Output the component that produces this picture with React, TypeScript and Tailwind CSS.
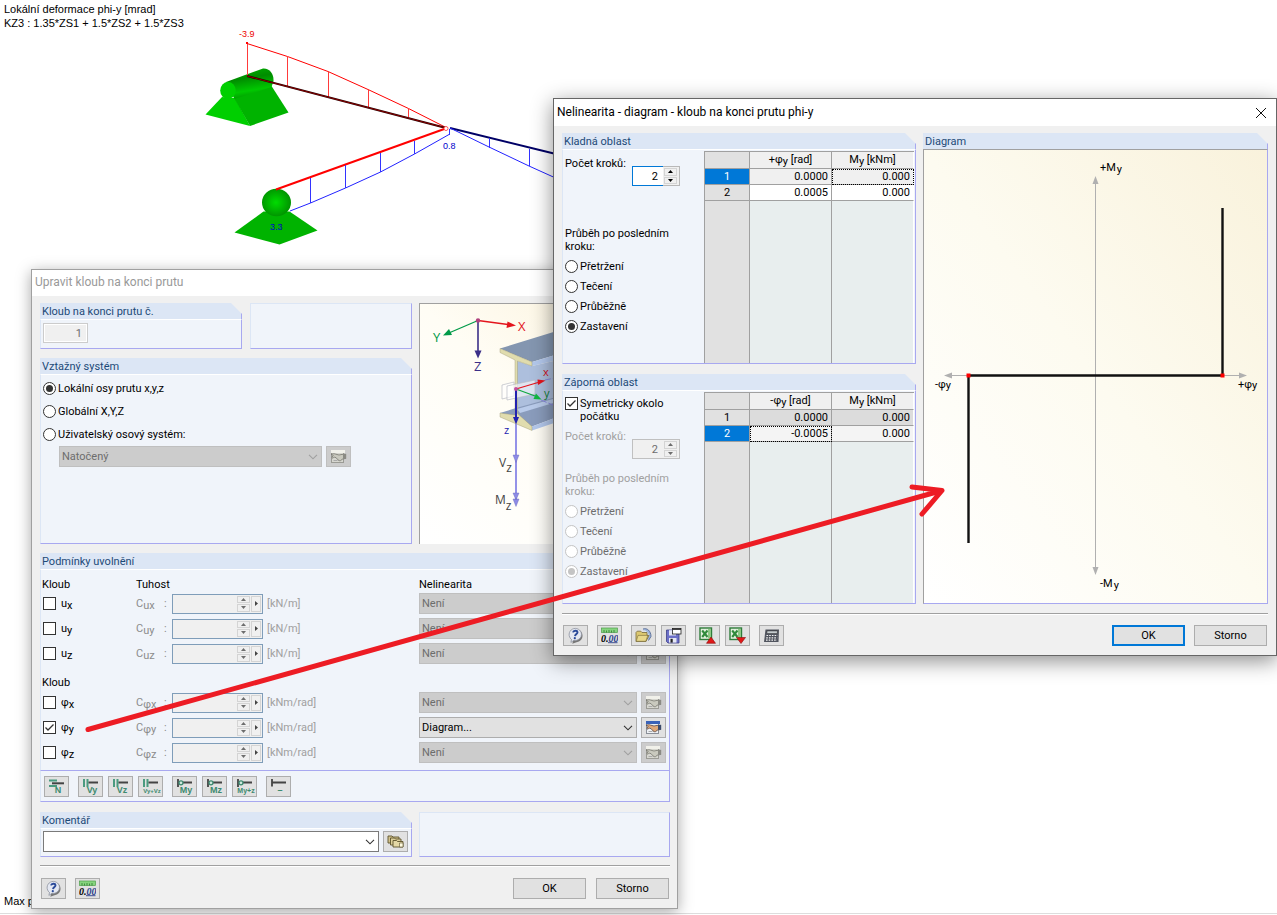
import { useState, type ReactNode } from 'react';
import clsx from 'clsx';

const stopModes = ['Přetržení', 'Tečení', 'Průběžně', 'Zastavení'];

const translations = [
  { base: 'u', axis: 'x' },
  { base: 'u', axis: 'y' },
  { base: 'u', axis: 'z' },
];

const rotations = [
  { base: 'φ', axis: 'x' },
  { base: 'φ', axis: 'y', active: true },
  { base: 'φ', axis: 'z' },
];

function Sub({ children }: { children: ReactNode }) {
  return <span className="align-[-2px] leading-none">{children}</span>;
}

function Group({ title, className, sunken, children }: { title: string; className?: string; sunken?: boolean; children?: ReactNode }) {
  return (
    <section className={clsx('flex flex-col', className)}>
      <h2 className="h-4 border-r border-[#a8a8f0] bg-[#dce6f5] pl-[2px] leading-[17px] text-[#1c4a78] [clip-path:polygon(0_0,calc(100%-11px)_0,100%_11px,100%_100%,0_100%)]">
        {title}
      </h2>
      <div
        className={clsx(
          'flex-1 border border-r-[#a8a8f0] border-b-[#a8a8f0]',
          sunken
            ? 'border-t-[#a0a0a0] border-l-[#a0a0a0] bg-linear-to-tr from-white via-[#fdfbf0] to-[#f9f2dc]'
            : 'border-t-white border-l-[#dce6f5] bg-[#f0f4fa]'
        )}
      >
        {children}
      </div>
    </section>
  );
}

function EmptyPanel({ className }: { className?: string }) {
  return (
    <div className={clsx('border border-t-[#dce6f5] border-r-[#a8a8f0] border-b-[#a8a8f0] border-l-[#dce6f5] bg-[#f0f4fa]', className)} />
  );
}

function Radio({ name, label, checked, disabled }: { name: string; label: string; checked?: boolean; disabled?: boolean }) {
  return (
    <label className={clsx('flex items-center gap-[2px]', disabled && 'text-[#6d6d6d]')}>
      <input
        type="radio"
        name={name}
        defaultChecked={checked}
        disabled={disabled}
        className="grid size-[13px] shrink-0 appearance-none place-content-center rounded-full border border-[#333] bg-white before:size-[7px] before:rounded-full before:content-[''] checked:before:bg-[#333] disabled:border-[#c4c4c4] disabled:checked:before:bg-[#c4c4c4]"
      />
      {label}
    </label>
  );
}

function Check({ id, checked }: { id: string; checked?: boolean }) {
  return (
    <span className="relative flex size-[13px] shrink-0">
      <input type="checkbox" id={id} defaultChecked={checked} className="peer size-[13px] appearance-none border border-[#333] bg-white" />
      <svg viewBox="0 0 13 13" className="pointer-events-none absolute inset-0 hidden peer-checked:block" fill="none" stroke="#333" strokeWidth="1.3">
        <path d="M2.5 6.5 5 9l5.5-5.5" />
      </svg>
    </span>
  );
}

function Select({ label, value, disabled, className }: { label: string; value: string; disabled?: boolean; className?: string }) {
  return (
    <div className={clsx('relative', className)}>
      <select
        aria-label={label}
        disabled={disabled}
        defaultValue={value}
        className={clsx(
          'block h-[21px] w-full appearance-none border pl-[2px] opacity-100',
          disabled
            ? 'border-[#bfbfbf] bg-[#ccc] text-[#6d6d6d]'
            : value
              ? 'border-[#adadad] bg-[#e1e1e1]'
              : 'border-[#7a7a7a] bg-white'
        )}
      >
        <option>{value}</option>
      </select>
      <svg viewBox="0 0 10 6" className="pointer-events-none absolute top-[8px] right-[4px] h-[6px] w-[10px]" fill="none" stroke={disabled ? '#a0a0a0' : '#333'} strokeWidth="1.1">
        <path d="M1 .8 5 4.8 9 .8" />
      </svg>
    </div>
  );
}

function Stepper() {
  return (
    <span className="flex w-[13px] flex-col gap-px">
      <button aria-label="Více" className="grid flex-1 place-content-center border border-[#d4d4d4] bg-[#f0f0f0]">
        <svg viewBox="0 0 5 3" className="h-[3px] w-[5px]"><path d="M0 3h5L2.500 0z" fill="currentColor" /></svg>
      </button>
      <button aria-label="Méně" className="grid flex-1 place-content-center border border-[#d4d4d4] bg-[#f0f0f0]">
        <svg viewBox="0 0 5 3" className="h-[3px] w-[5px]"><path d="M0 0h5L2.500 3z" fill="currentColor" /></svg>
      </button>
    </span>
  );
}

function StepCount({ id, disabled }: { id: string; disabled?: boolean }) {
  const [steps, setSteps] = useState('2');
  return (
    <div className={clsx('flex h-5 w-12 border bg-[#f0f0f0]', disabled ? 'border-[#c0c0c0] text-[#6d6d6d]' : 'border-[#b8b8b8]')}>
      <input
        id={id}
        value={steps}
        disabled={disabled}
        onChange={(e) => setSteps(e.target.value)}
        className={clsx('-my-px -ml-px w-[31px] pr-[5px] text-right outline-none', !disabled && 'border border-r-0 border-[#0078d7] bg-white')}
      />
      <span className="flex py-px pl-px">
        <Stepper />
      </span>
    </div>
  );
}

function IconButton({ label, disabled, children }: { label: string; disabled?: boolean; children: ReactNode }) {
  return (
    <button
      aria-label={label}
      disabled={disabled}
      className={clsx('grid h-[21px] w-[25px] shrink-0 place-content-center border', disabled ? 'border-[#bfbfbf] bg-[#ccc]' : 'border-[#adadad] bg-[#e1e1e1]')}
    >
      {children}
    </button>
  );
}

function PushButton({ primary, children }: { primary?: boolean; children: ReactNode }) {
  return (
    <button className={clsx('h-[21px] w-[73px] bg-[#e1e1e1]', primary ? 'border-2 border-[#0078d7]' : 'border border-[#adadad]')}>
      {children}
    </button>
  );
}

function HelpIcon() {
  return (
    <svg width="17" height="17" viewBox="0 0 17 17">
      <path d="M14.500 8a6.200 6.200 0 0 1-6 6.800L4.300 16.300l.8-2.600A6.300 6.300 0 1 1 14.500 8z" fill="#777" transform="translate(1 .4)" />
      <path d="M14.500 7.200A6.200 6 0 0 1 7 13.300L3.900 15.400l.6-2.900A6.200 6.200 0 1 1 14.500 7.200z" fill="#e4e8f2" stroke="#8e93a0" strokeWidth=".8" />
      <path d="M6 5.400C6.500 3.300 10.300 3 10.500 5.200c.1 1.700-2.200 1.900-2.500 4" fill="none" stroke="#2a4a9a" strokeWidth="1.900" />
      <circle cx="7.800" cy="11.200" r="1.100" fill="#2a4a9a" />
    </svg>
  );
}

function UnitsIcon() {
  return (
    <svg width="17" height="17" viewBox="0 0 17 17">
      <rect x=".5" y="1" width="16" height="4.500" fill="#86d47e" stroke="#4f9d4c" strokeWidth=".7" />
      <path d="M3 3v2.500M5.500 3.500v2M8 3v2.500M10.500 3.500v2M13 3v2.500" stroke="#2f7a2f" strokeWidth=".8" />
      <text x="0" y="14.500" fontFamily="Liberation Serif, serif" fontStyle="italic" fontWeight="700" fontSize="10">
        0.<tspan fill="#2b3f8c">00</tspan>
      </text>
      <path d="M7 15.700h9.500" stroke="#2b3f8c" strokeWidth=".9" />
    </svg>
  );
}

function EditIcon({ active }: { active?: boolean }) {
  return (
    <svg width="17" height="15" viewBox="0 0 17 15">
      <rect x="1.500" y="1.500" width="12" height="12" fill={active ? '#eef1f5' : '#d7d7d0'} stroke={active ? '#8a8f98' : '#9b9b95'} />
      <rect x="1" y="1" width="14" height="3" fill={active ? '#3a62b8' : '#f1f1ea'} />
      <path
        d="M1 5.300c1.500-.6 3.200-.8 4.500-.2L9 6l3-.6 3.500.2V9.500l-3 .4c-1 1.800-3 2.600-4.500 1L6.200 8.800 4.300 8 3 9.300 1.800 8.300 3.300 6.500z"
        fill={active ? '#e0a878' : '#c9c9be'}
        stroke={active ? '#5b4a48' : '#77776f'}
        strokeWidth=".8"
      />
      <rect x="13" y="4.800" width="3.200" height="5" fill={active ? '#3b4a6b' : '#8b8b84'} />
      <path d="M3.500 11.500h4" stroke="#aaa" />
    </svg>
  );
}

function OpenIcon() {
  return (
    <svg width="17" height="17" viewBox="0 0 17 17">
      <path d="M8 2c4-1.500 8 2 8 7.500l-2.500 4" fill="#9fb6dc" stroke="#4a5f8c" strokeWidth=".8" />
      <path d="M9 4c2.500 0 4.500 2.500 4.500 6" fill="none" stroke="#fff" strokeWidth="1" />
      <path d="M1 14.500V5.500l1.200-1.300h3.600L7 5.500h5v3L14 8.400l-3 6.100z" fill="#dcc870" stroke="#77693a" strokeWidth=".8" />
      <path d="M1.200 14.300 3 8.400h9.800l-2 5.900z" fill="#e8d88a" stroke="#77693a" strokeWidth=".6" />
    </svg>
  );
}

function SaveIcon() {
  return (
    <svg width="17" height="17" viewBox="0 0 17 17">
      <path d="M1.500 3h12.500v13H3L1.500 14.500z" fill="#6c70c8" stroke="#3c3f86" strokeWidth=".8" />
      <rect x="4" y="3.200" width="7" height="5.300" fill="#e6e8f4" />
      <rect x="4" y="11" width="7.500" height="4.600" fill="#e6e8f4" />
      <rect x="5.500" y="11.800" width="2.200" height="3.800" fill="#222" />
      <rect x="7.500" y="1.500" width="8.500" height="5.500" fill="#fff" stroke="#222" strokeWidth=".8" />
      <path d="M7.500 2.200H16" stroke="#222" strokeWidth="1.300" />
    </svg>
  );
}

function ExcelIcon({ down }: { down?: boolean }) {
  return (
    <svg width="17" height="17" viewBox="0 0 17 17">
      <rect x="1" y="1" width="11.500" height="11.500" fill="#e2f0de" stroke="#2f7d3b" strokeWidth="1.400" />
      <path d="M9 2h3v9.500H9z" fill="#8cc884" />
      <path d="M3.200 3.500 8.500 10M8.500 3.500 3.200 10" stroke="#2f8a3b" strokeWidth="2.100" />
      <path d={down ? 'M7.500 10.500h9L12 16.500z' : 'M7.500 16.300h9L12 10z'} fill="#e01818" stroke="#8c0c0c" strokeWidth=".6" />
    </svg>
  );
}

function CalculatorIcon() {
  return (
    <svg width="17" height="15" viewBox="0 0 17 15">
      <path d="M2.500 1.500H16L15.500 14H1z" fill="#50545e" />
      <path d="M4 3h10.500l-.2 2.400H3.800z" fill="#cfd6da" stroke="#222" strokeWidth=".5" />
      <path d="M3.500 7.500h11M3.200 9.800h11M3 12.100h11" stroke="#f2f2f2" strokeWidth="1.200" strokeDasharray="1.600 1.100" />
    </svg>
  );
}

function CommentIcon() {
  return (
    <svg width="17" height="15" viewBox="0 0 17 15" stroke="#5c522c" strokeWidth=".9">
      <path d="M1 2h4l1 1h6v6H1z" fill="#d2c28a" />
      <path d="M3.500 4h4l1 1H14v6H3.500z" fill="#dccf9a" />
      <path d="M6 6.500h3.500l1 1H16v5.500H6z" fill="#e4d8a6" />
      <path d="M12.500 9h3.500v4h-3.500z" fill="#fffbe0" strokeWidth=".6" />
    </svg>
  );
}

function PresetIcon({ kind, label }: { kind: 'n' | 'v' | 'm' | 'none'; label: string }) {
  return (
    <svg width="21" height="17" viewBox="0 0 21 17">
      {kind === 'n' && (
        <>
          <path d="M3 2.500h8M3 8h8" stroke="#4b9b80" strokeWidth="2" />
          <path d="M6 5.300h12" stroke="#444" strokeWidth="2" />
        </>
      )}
      {kind === 'v' && (
        <>
          <path d="M4 1v8M7.500 1v8" stroke="#4b9b80" strokeWidth="2" />
          <path d="M8.500 4.500H18" stroke="#444" strokeWidth="2" />
        </>
      )}
      {kind === 'm' && (
        <>
          <path d="M4 1v8M8 4.500h10" stroke="#444" strokeWidth="1.800" />
          <circle cx="7" cy="4.800" r="2" fill="#cfe8dd" stroke="#3d8a70" strokeWidth="1.300" />
        </>
      )}
      {kind === 'none' && <path d="M4 1v7.500M4.500 4.500H18" stroke="#444" strokeWidth="1.800" />}
      <text
        x="12"
        y="15"
        textAnchor="middle"
        fontFamily="Liberation Sans, sans-serif"
        fontWeight="700"
        fontSize={label.length > 4 ? 6 : label.length > 3 ? 7 : 9}
        fill="#3d8a70"
      >
        {label}
      </text>
    </svg>
  );
}

function Separator({ className }: { className?: string }) {
  return <div className={clsx('h-[2px] border-t border-b border-t-[#a0a0a0] border-b-white', className)} />;
}

function ReleaseRow({ base, axis, unit, active }: { base: string; axis: string; unit: string; active?: boolean }) {
  const id = `release-${base}-${axis}`;
  return (
    <div className="grid h-[25px] grid-cols-[93px_28px_8px_95px_152px_1fr_25px] items-center pl-[2px] pr-[3px]">
      <span className="flex items-center gap-[5px]">
        <Check id={id} checked={active} />
        <label htmlFor={id}>
          {base}
          <Sub>{axis}</Sub>
        </label>
      </span>
      <label htmlFor={`${id}-stiffness`} className="text-[#8c8c8c]">
        C
        <Sub>
          {base}
          {axis}
        </Sub>
      </label>
      <span className="text-[#8c8c8c]">:</span>
      <span className="flex h-5 w-[91px] border border-[#7f9db9] bg-[#f0f0f0] p-px text-[#6d6d6d]">
        <input id={`${id}-stiffness`} disabled className="w-0 flex-1" />
        <Stepper />
        <button aria-label="Další" className="ml-px grid w-[10px] place-content-center border border-[#d4d4d4]">
          <svg viewBox="0 0 3 5" className="h-[5px] w-[3px]"><path d="M0 0v5l3-2.500z" fill="#444" /></svg>
        </button>
      </span>
      <span className="text-[#a0a0a0]">{unit}</span>
      <Select label={`Nelinearita ${base}${axis}`} value={active ? 'Diagram...' : 'Není'} disabled={!active} className="pr-1 [&>svg]:mr-1" />
      <IconButton label="Upravit nelinearitu" disabled={!active}>
        <EditIcon active={active} />
      </IconButton>
    </div>
  );
}

function Scene() {
  return (
    <svg className="absolute top-0 left-0" width="600" height="270" viewBox="0 0 600 270" fontFamily="Liberation Sans, sans-serif" fontSize="9">
      <defs>
        <linearGradient id="roller" x1=".2" y1="0" x2=".45" y2="1">
          <stop offset="0" stopColor="#00b000" />
          <stop offset=".35" stopColor="#008c00" />
          <stop offset=".75" stopColor="#00c800" />
          <stop offset="1" stopColor="#009400" />
        </linearGradient>
        <radialGradient id="ball" cx=".48" cy=".5" r=".55">
          <stop offset="0" stopColor="#00dc00" />
          <stop offset="1" stopColor="#008f00" />
        </radialGradient>
      </defs>
      <path d="M222 97 205.500 114.500 250 126 235 98z" fill="#00cf00" />
      <path d="M234 98 250 126 288.500 112.500 271.500 86z" fill="#00b300" />
      <path d="M226 82 263 68.500c7-.5 11 6 10.500 12.500L271.500 87 234.500 99z" fill="url(#roller)" />
      <ellipse cx="228" cy="90.500" rx="7.800" ry="8.500" fill="#00cf00" />
      <path d="M263.500 211.500 234.500 232.500 279.500 244.500 317.500 230.500 289.500 211.500z" fill="#00b300" />
      <ellipse cx="276.500" cy="202.500" rx="14.500" ry="13.700" fill="url(#ball)" />
      <g fill="none">
        <path d="M247 43.500 287.500 56.500 328 71.500 368 89.500 408.500 108.500 447 128" stroke="#f00" />
        <path d="M247.500 43v33M287.500 56v30M328.500 71v26M368.500 89v18M408.500 108v9" stroke="#ff3a3a" />
        <path d="M247 76 446 128" stroke="#200" strokeWidth="2" />
        <path d="M247 76 446 128" stroke="#c00" strokeWidth=".6" />
        <path d="M276 189.500 447 128" stroke="#f00" strokeWidth="2" />
        <path d="M290 211 310.500 203 345.500 188 380.500 172 414.500 154 449 134.500" stroke="#22f" />
        <path d="M310.500 178v25M345.500 165v23M380.500 153v19M414.500 141v13M449.500 129v6" stroke="#33f" />
        <path d="M450 128 560 155" stroke="#006" strokeWidth="2" />
        <path d="M450 128 489 147 529 166 560 180" stroke="#22f" />
        <path d="M489.500 138v10M529.500 149v17" stroke="#33f" />
      </g>
      <rect x="246" y="42" width="2" height="2" fill="#f00" />
      <circle cx="446" cy="128.500" r="2" fill="#fff" stroke="#f55" />
      <text x="239" y="37" fill="#e00">-3.9</text>
      <text x="443" y="149" fill="#00c">0.8</text>
      <text x="270" y="230" fill="#00c">3.3</text>
    </svg>
  );
}

function BeamSketch() {
  return (
    <svg className="block h-full w-full" viewBox="420 304 250 240" preserveAspectRatio="xMinYMin slice" fontFamily="Open Sans, sans-serif">
      <path d="M500 348.500 560 330v23.500l-28 8.500z" fill="#8496b0" />
      <path d="M532 362 560 353.500v6L532 366z" fill="#b3c8ec" />
      <path d="M517 361 532 366l28-6.500V407l-43 12z" fill="#adbfdd" />
      <path d="M500 413 516 408l44-12v20l-28 10.500z" fill="#8a9cbc" />
      <path d="M517 409l43-12v4l-40 12z" fill="#b9cbea" />
      <path d="M532 426.500 560 416v5L532 430.500z" fill="#b3c8ec" />
      <path d="M500 348.500 532 362v4l-14.500-5v52.500l14.500 13v4L500 417v-4l15 2v-55l-15-7.500z" fill="#e0dcae" stroke="#9a966e" strokeWidth=".4" />
      <g fill="#fff" fillOpacity=".6" stroke="#b9bcc4" strokeWidth=".7">
        <path d="M502 385 514 382v14l-12 3z" />
        <path d="M507 386 535 380v14l-28 6z" />
      </g>
      <path d="M545 380 560 377M541 400 560 408" stroke="#8a88e0" strokeDasharray="6 2" />
      <g fill="none" strokeWidth="1.300">
        <path d="M478 320.500 508 324.500" stroke="#e3141c" />
        <path d="M478 320.500 450 332.500" stroke="#009a48" />
        <path d="M478 320v32" stroke="#3b2f88" strokeWidth="1.600" />
        <path d="M516 389 538 382.500" stroke="#e3141c" />
        <path d="M516 389 535 396" stroke="#10a840" />
        <path d="M516 389v31" stroke="#2222b0" strokeWidth="2" />
        <path d="M516 424v76" stroke="#9492e8" strokeWidth="2" />
      </g>
      <path d="M516 325.500 506.500 328 507.500 321.500z" fill="#e3141c" />
      <path d="M443 335.500 449 329l3 6z" fill="#009a48" />
      <path d="M474.500 350.500h7l-3.500 8z" fill="#3b2f88" />
      <path d="M545.500 380.500 538 385 537.500 379.500z" fill="#e3141c" />
      <path d="M541.500 399.500 533.500 399 536 393.500z" fill="#10b840" />
      <path d="M513 417h6l-3 7.500z" fill="#2222b0" />
      <g fill="#8d8be6" stroke="#6664b8" strokeWidth=".4">
        <path d="M513 455h6l-3 7.500zM513 493h6l-3 7zM513 499h6l-3 7.500z" />
      </g>
      <circle cx="478" cy="320.500" r="2.200" fill="#b0427e" />
      <circle cx="516" cy="389" r="2" fill="#c050a0" />
      <g fontSize="13">
        <text x="518" y="331" fill="#e3141c">X</text>
        <text x="433" y="342" fill="#009a48">Y</text>
        <text x="474" y="371" fill="#3b2f88">Z</text>
        <text x="543" y="376" fontSize="11" fill="#d01020">x</text>
        <text x="544" y="397" fontSize="11" fill="#108038">y</text>
        <text x="504" y="434" fontSize="11" fill="#2222b0">z</text>
        <text x="499" y="467" fontSize="12" fill="#444">V<tspan dy="5">z</tspan></text>
        <text x="495" y="504" fontSize="12" fill="#444">M<tspan dy="6">z</tspan></text>
      </g>
    </svg>
  );
}

function NonlinearityChart() {
  return (
    <svg className="block h-full w-full" viewBox="924 150 343 453" fontFamily="Roboto, sans-serif" fontSize="11">
      <path d="M1095.500 178v396M946 375.500h299" stroke="#b0b0b0" />
      <path d="M1092.500 184h6l-3-8zM1092.500 567h6l-3 8zM952 372.500v6l-8-3zM1239 372.500v6l8-3z" fill="#b0b0b0" />
      <path d="M968.500 543V375.500h254V208" fill="none" stroke="#111" strokeWidth="2.400" />
      <path d="M966.500 373.500h4v4h-4zM1220.500 373.500h4v4h-4z" fill="#f00" />
      <text x="1100" y="171">+M<tspan dx="1" dy="2">y</tspan></text>
      <text x="1100" y="587">-M<tspan dx="1" dy="2">y</tspan></text>
      <text x="935" y="388">-φ<tspan dy="1">y</tspan></text>
      <text x="1238" y="388">+φ<tspan dy="1">y</tspan></text>
    </svg>
  );
}

type StepRow = { cells: [string, string]; tone: string; focus?: number; selected?: boolean };

function StepTable({ sign, rows }: { sign: string; rows: StepRow[] }) {
  return (
    <table className="mt-px mr-px w-[210px] table-fixed border-separate border-spacing-0 border-t border-l border-[#a0a0a0] bg-[#e8eeee] leading-[14px] [&_td]:border-r [&_td]:border-[#a0a0a0] [&_td:last-child]:border-r-white [&_th]:border-r [&_th]:border-[#a0a0a0] [&_th:last-child]:border-r-white">
      <colgroup>
        <col className="w-[45px]" />
        <col className="w-[82px]" />
        <col className="w-[82px]" />
      </colgroup>
      <thead>
        <tr className="h-[17px] bg-[#f0f0f0]">
          <th className="border-b bg-[#e1e1e1]" />
          <th className="border-b font-normal">{sign}φ<Sub>y</Sub> [rad]</th>
          <th className="border-b font-normal">M<Sub>y</Sub> [kNm]</th>
        </tr>
      </thead>
      <tbody>
        {rows.map((row, i) => (
          <tr key={i} className={clsx('h-4', row.tone)}>
            <th className={clsx('border-b font-normal', row.selected ? 'bg-[#0078d7] text-white' : 'bg-[#e1e1e1]')}>{i + 1}</th>
            {row.cells.map((cell, j) => (
              <td
                key={j}
                className={clsx('border-b pr-[3px] text-right', row.focus === j && 'outline-1 -outline-offset-1 outline-black outline-dotted')}
              >
                {cell}
              </td>
            ))}
          </tr>
        ))}
        <tr>
          <th className="bg-[#e1e1e1]" />
          <td />
          <td />
        </tr>
      </tbody>
    </table>
  );
}

function StopModes({ name, disabled, className }: { name: string; disabled?: boolean; className: string }) {
  return (
    <fieldset className={className}>
      <legend className="contents">
        <span className={clsx('block w-28 pb-[3px] leading-[13px]', disabled && 'text-[#a0a0a0]')}>Průběh po posledním kroku:</span>
      </legend>
      <div className="flex flex-col [&>label]:h-5">
        {stopModes.map((mode) => (
          <Radio key={mode} name={name} label={mode} checked={mode === 'Zastavení'} disabled={disabled} />
        ))}
      </div>
    </fieldset>
  );
}

function HingeDialog() {
  return (
    <div
      role="dialog"
      aria-label="Upravit kloub na konci prutu"
      className="absolute top-[269px] left-[31px] w-[647px] border border-[#a0a0a0] bg-[#f0f0f0] shadow-[0_3px_14px_rgba(0,0,0,0.35)]"
    >
      <header className="h-[26px] bg-white pl-[3px] text-[12px] leading-[25px] text-[#999]">Upravit kloub na konci prutu</header>
      <div className="pt-[7px] pr-[7px] pb-[9px] pl-2">
        <div className="flex gap-[7px]">
          <div className="flex w-[372px] flex-col gap-[9px]">
            <div className="flex gap-2">
              <Group title="Kloub na konci prutu č." className="h-[46px] w-[202px]">
                <input
                  aria-label="Kloub na konci prutu č."
                  disabled
                  defaultValue="1"
                  className="mt-[3px] ml-[2px] block h-5 w-[45px] border border-[#ccc] bg-[#f0f0f0] pr-[5px] text-right text-[#6d6d6d] shadow-[inset_0_0_0_1px_#fff]"
                />
              </Group>
              <EmptyPanel className="flex-1" />
            </div>
            <Group title="Vztažný systém" className="h-[186px]">
              <div className="flex flex-col pt-[2px] pl-[2px] [&>label]:h-[23px]">
                <Radio name="system" label="Lokální osy prutu x,y,z" checked />
                <Radio name="system" label="Globální X,Y,Z" />
                <Radio name="system" label="Uživatelský osový systém:" />
                <div className="flex gap-1 pl-4">
                  <Select label="Osový systém" value="Natočený" disabled className="w-[263px]" />
                  <IconButton label="Upravit osový systém" disabled>
                    <EditIcon />
                  </IconButton>
                </div>
              </div>
            </Group>
          </div>
          <div className="h-[241px] flex-1 border-t border-l border-[#a0a0a0] bg-linear-to-tr from-white via-[#fffdf5] to-[#fbf1d8]">
            <BeamSketch />
          </div>
        </div>

        <Group title="Podmínky uvolnění" className="mt-[9px]">
          <div className="grid h-[21px] grid-cols-[94px_283px_1fr] items-end pl-px">
            <span>Kloub</span>
            <span>Tuhost</span>
            <span>Nelinearita</span>
          </div>
          {translations.map((row) => (
            <ReleaseRow key={row.axis} {...row} unit="[kN/m]" />
          ))}
          <div className="flex h-6 items-end pb-px pl-px">Kloub</div>
          {rotations.map((row) => (
            <ReleaseRow key={row.axis} {...row} unit="[kNm/rad]" />
          ))}
          <div className="h-[5px]" />
        </Group>
        <div className="flex h-[31px] items-center gap-[9px] border-r border-b border-l border-r-[#a8a8f0] border-b-[#a8a8f0] border-l-[#dce6f5] bg-[#f0f4fa] pl-[3px]">
          <IconButton label="N"><PresetIcon kind="n" label="N" /></IconButton>
          <div className="flex gap-[5px]">
            <IconButton label="Vy"><PresetIcon kind="v" label="Vy" /></IconButton>
            <IconButton label="Vz"><PresetIcon kind="v" label="Vz" /></IconButton>
            <IconButton label="Vy+Vz"><PresetIcon kind="v" label="Vy+Vz" /></IconButton>
          </div>
          <div className="flex gap-[5px]">
            <IconButton label="My"><PresetIcon kind="m" label="My" /></IconButton>
            <IconButton label="Mz"><PresetIcon kind="m" label="Mz" /></IconButton>
            <IconButton label="My+z"><PresetIcon kind="m" label="My+z" /></IconButton>
          </div>
          <IconButton label="Žádný"><PresetIcon kind="none" label="–" /></IconButton>
        </div>

        <div className="mt-[10px] flex gap-[7px]">
          <Group title="Komentář" className="h-[45px] w-[372px]">
            <div className="flex gap-1 pt-[2px] pl-[2px]">
              <Select label="Komentář" value="" className="w-[336px]" />
              <IconButton label="Vybrat komentář"><CommentIcon /></IconButton>
            </div>
          </Group>
          <EmptyPanel className="flex-1" />
        </div>
        <Separator className="mt-[8px]" />
        <footer className="mt-[11px] flex items-center gap-[9px] px-px">
          <IconButton label="Nápověda"><HelpIcon /></IconButton>
          <IconButton label="Jednotky"><UnitsIcon /></IconButton>
          <div className="ml-auto flex gap-[10px]">
            <PushButton>OK</PushButton>
            <PushButton>Storno</PushButton>
          </div>
        </footer>
      </div>
    </div>
  );
}

function NonlinearityDialog() {
  return (
    <div
      role="dialog"
      aria-label="Nelinearita - diagram"
      className="absolute top-[98px] left-[553px] w-[724px] border border-[#666] bg-[#f0f0f0] shadow-[0_5px_20px_rgba(0,0,0,0.45)]"
    >
      <header className="flex h-[27px] items-center justify-between bg-white pr-[9px] pl-[3px] text-[12px]">
        Nelinearita - diagram - kloub na konci prutu phi-y
        <button aria-label="Zavřít">
          <svg width="12" height="12" viewBox="0 0 12 12" stroke="#111"><path d="m1 1 10 10M11 1 1 11" /></svg>
        </button>
      </header>
      <div className="px-2 pt-[7px] pb-[9px]">
        <div className="flex gap-[7px]">
          <div className="flex w-[354px] flex-col gap-[10px]">
            <Group title="Kladná oblast" className="h-[231px] [&>div]:flex">
              <div className="flex-1 pl-[2px]">
                <div className="flex h-9 items-end justify-between pr-6">
                  <label htmlFor="positive-steps" className="mb-[16px] leading-[13px]">Počet kroků:</label>
                  <StepCount id="positive-steps" />
                </div>
                <StopModes name="positive" className="pt-[41px]" />
              </div>
              <StepTable
                sign="+"
                rows={[
                  { cells: ['0.0000', '0.000'], tone: 'bg-[#f0f0f0]', selected: true, focus: 1 },
                  { cells: ['0.0005', '0.000'], tone: 'bg-white' },
                ]}
              />
            </Group>
            <Group title="Záporná oblast" className="h-[230px] [&>div]:flex">
              <div className="flex-1 pl-[2px]">
                <div className="flex gap-[2px] pt-[6px]">
                  <Check id="symmetric" checked />
                  <label htmlFor="symmetric" className="w-24 leading-[13px]">Symetricky okolo počátku</label>
                </div>
                <div className="flex h-9 items-end justify-between pr-6">
                  <label htmlFor="negative-steps" className="mb-[16px] leading-[13px] text-[#a0a0a0]">Počet kroků:</label>
                  <StepCount id="negative-steps" disabled />
                </div>
                <StopModes name="negative" className="pt-[13px]" disabled />
              </div>
              <StepTable
                sign="-"
                rows={[
                  { cells: ['0.0000', '0.000'], tone: 'bg-[#dcdcdc]' },
                  { cells: ['-0.0005', '0.000'], tone: 'bg-[#f4f4f4]', selected: true, focus: 0 },
                ]}
              />
            </Group>
          </div>
          <Group title="Diagram" className="flex-1" sunken>
            <NonlinearityChart />
          </Group>
        </div>
        <Separator className="mt-[9px]" />
        <footer className="mt-[10px] flex items-center gap-[9px] px-px">
          <IconButton label="Nápověda"><HelpIcon /></IconButton>
          <IconButton label="Jednotky"><UnitsIcon /></IconButton>
          <div className="flex gap-[5px]">
            <IconButton label="Otevřít"><OpenIcon /></IconButton>
            <IconButton label="Uložit"><SaveIcon /></IconButton>
          </div>
          <div className="flex gap-[5px]">
            <IconButton label="Export do Excelu"><ExcelIcon /></IconButton>
            <IconButton label="Import z Excelu"><ExcelIcon down /></IconButton>
          </div>
          <IconButton label="Kalkulačka"><CalculatorIcon /></IconButton>
          <div className="ml-auto flex gap-[9px]">
            <PushButton primary>OK</PushButton>
            <PushButton>Storno</PushButton>
          </div>
        </footer>
      </div>
    </div>
  );
}

export default function App() {
  return (
    <main className="relative flex min-h-screen flex-col justify-between overflow-hidden bg-white font-[Roboto,sans-serif] text-[11px] leading-[13px] text-black">
      <p className="pt-[2px] pl-1 font-['Liberation_Sans',sans-serif] leading-[14px]">
        Lokální deformace phi-y [mrad]
        <br />
        KZ3 : 1.35*ZS1 + 1.5*ZS2 + 1.5*ZS3
      </p>
      <p className="mb-px border-b border-[#ddd] pb-[5px] pl-1 font-['Liberation_Sans',sans-serif]">Max phi-y</p>
      <Scene />
      <HingeDialog />
      <NonlinearityDialog />
      <svg className="pointer-events-none absolute top-0 left-0" width="960" height="740" viewBox="0 0 960 740" fill="none" stroke="#ed1c24" strokeWidth="5" strokeLinecap="round" strokeLinejoin="round">
        <path d="M88 729.500 942 490.500M912 487 942 490.500 922 514" />
      </svg>
    </main>
  );
}
